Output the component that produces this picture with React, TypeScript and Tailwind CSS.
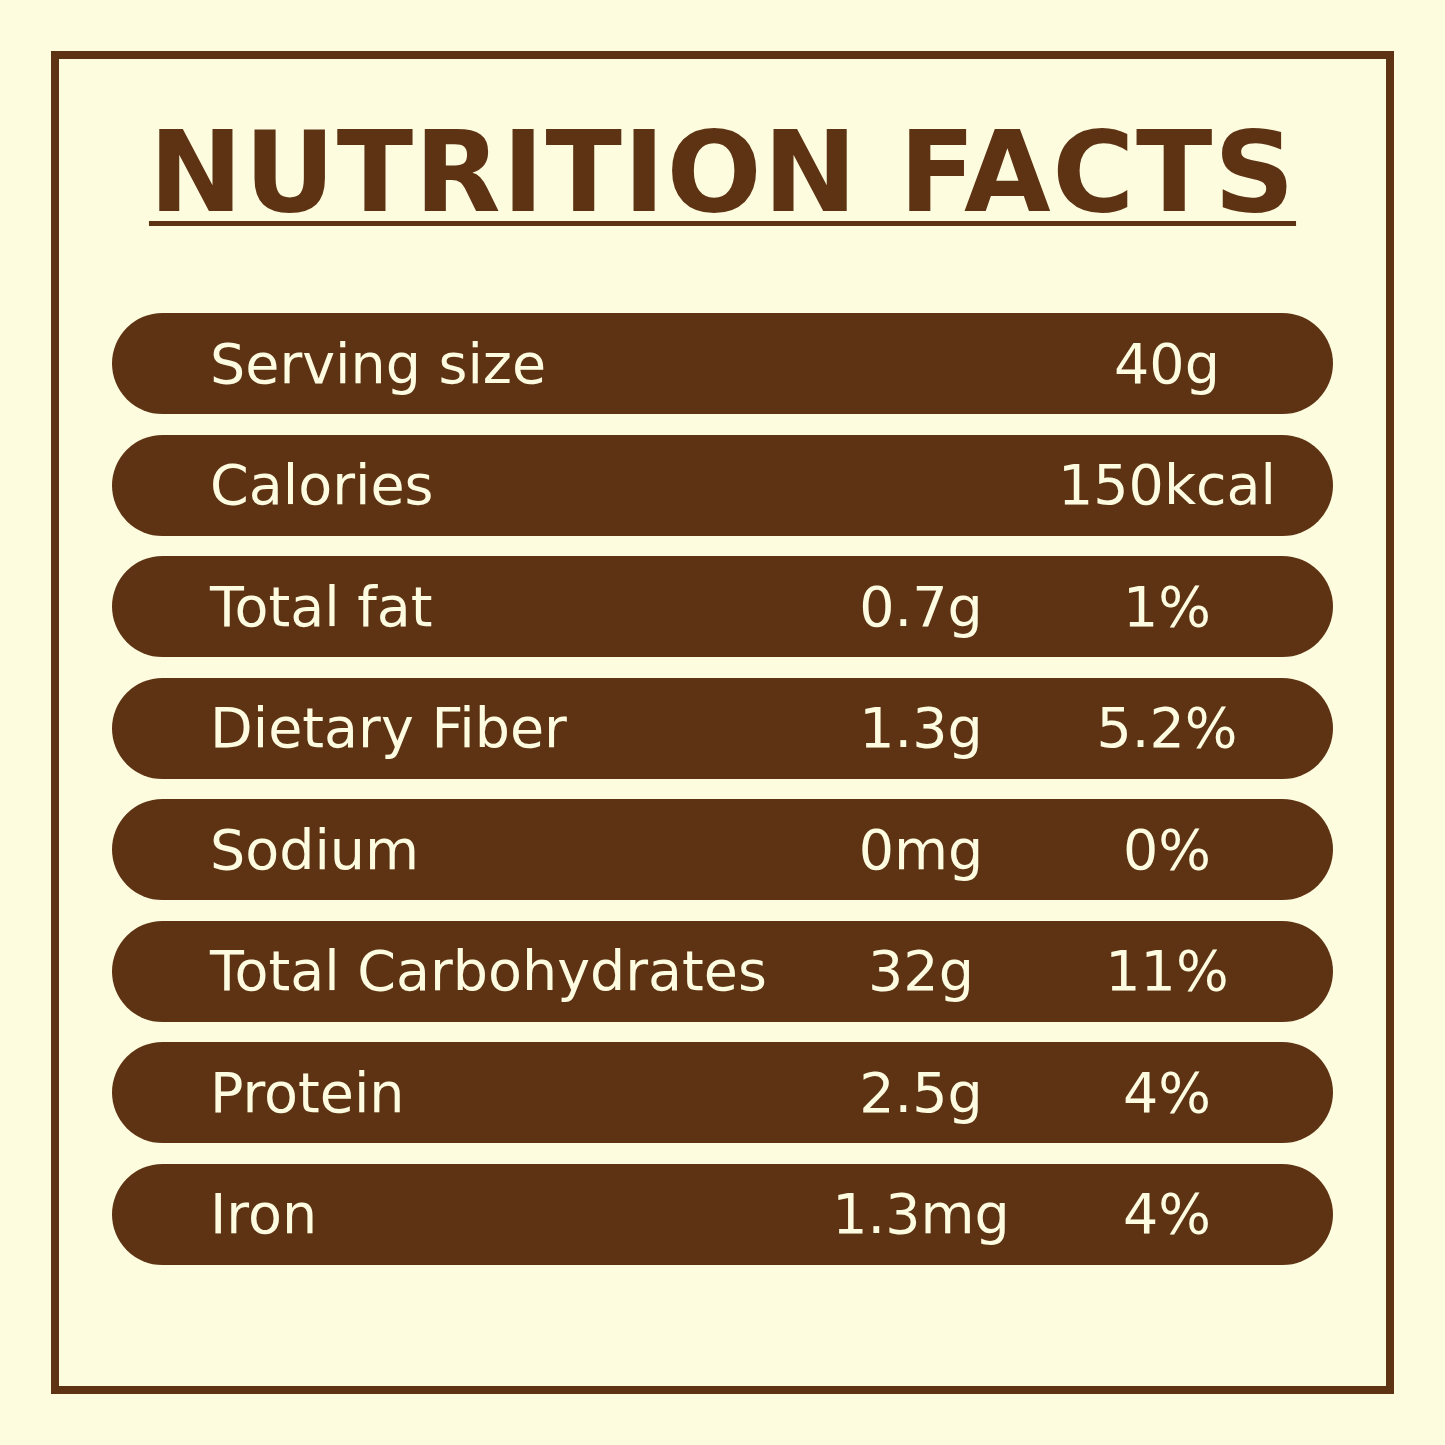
const rows: { label: string; amount?: string; dv: string }[] = [
  { label: "Serving size", dv: "40g" },
  { label: "Calories", dv: "150kcal" },
  { label: "Total fat", amount: "0.7g", dv: "1%" },
  { label: "Dietary Fiber", amount: "1.3g", dv: "5.2%" },
  { label: "Sodium", amount: "0mg", dv: "0%" },
  { label: "Total Carbohydrates", amount: "32g", dv: "11%" },
  { label: "Protein", amount: "2.5g", dv: "4%" },
  { label: "Iron", amount: "1.3mg", dv: "4%" },
];

export default function App() {
  return (
    <div className="w-[1445px] h-[1445px] bg-[#fdfcdf] p-[51px] font-['DejaVu_Sans',sans-serif]">
      <div className="w-[1343px] h-[1343px] border-[8px] border-[#5e3314] px-[53px]">
        <div className="h-[254px] pt-[57px] flex justify-center">
          <h1 className="text-[112px] leading-none font-bold tracking-[1.5px] text-[#5e3314] underline decoration-[5px] underline-offset-[10px] whitespace-nowrap">
            NUTRITION FACTS
          </h1>
        </div>
        <div className="flex flex-col gap-[20.5px]">
          {rows.map((r) => (
            <div
              key={r.label}
              className="h-[101px] rounded-full bg-[#5e3314] text-[#fdfbe0] text-[55.5px] leading-none grid grid-cols-[585px_180px_240px] gap-x-[36px] items-center pl-[98px]"
            >
              <span className="whitespace-nowrap">{r.label}</span>
              <span className="text-center whitespace-nowrap">{r.amount ?? ""}</span>
              <span className="text-center whitespace-nowrap">{r.dv}</span>
            </div>
          ))}
        </div>
      </div>
    </div>
  );
}
